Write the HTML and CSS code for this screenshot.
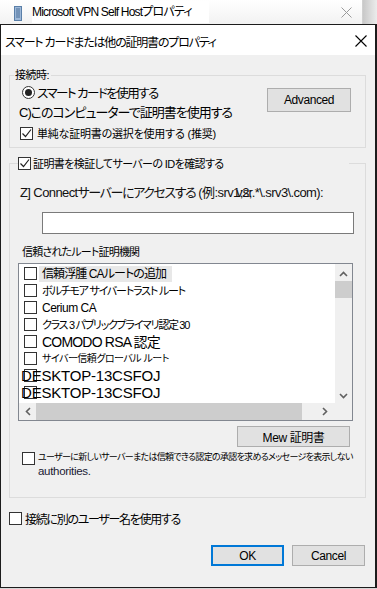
FILE: index.html
```html
<!DOCTYPE html>
<html lang="ja">
<head>
<meta charset="utf-8">
<link rel="stylesheet" href="styles.css">
</head>
<body>
<div class="parent">
  <div class="pbar">
    <svg class="picon" width="8" height="15" viewBox="0 0 8 15"><rect x="0.5" y="0.5" width="7" height="14" fill="#9db8d8" stroke="#5a7fa8"/><path d="M2 3h4M2 5h4M2 7h4M2 9h4M2 11h4" stroke="#4a6f98" stroke-width="1"/></svg>
    <span class="ptitle">Microsoft VPN Self Hostプロパティ</span>
    <span class="pfill"></span>
    <svg class="pclose" width="11" height="11" viewBox="0 0 11 11"><path d="M0.5 0.5l10 10M10.5 0.5l-10 10" stroke="#9a9a9a" stroke-width="1"/></svg>
  </div>
  <div class="pshadow"></div>
</div>
<div class="dialog">
  <div class="titlebar">
    <span class="title">スマート カードまたは他の証明書のプロパティ</span>
    <svg class="close" width="12" height="12" viewBox="0 0 12 12"><path d="M0.5 0.5l11 11M11.5 0.5l-11 11" stroke="#000" stroke-width="1.1"/></svg>
  </div>
  <div class="client">
    <div class="group g1">
      <div class="legend lg1">接続時:</div>
      <div class="g1body">
        <div class="opts">
          <div class="row r1"><span class="radio"><span class="dot"></span></span><span class="t12c">スマート カードを使用する</span></div>
          <div class="row r2 t13">C)このコンピューターで証明書を使用する</div>
          <div class="row r3"><span class="cb"><svg width="11" height="11" viewBox="0 0 11 11"><path d="M1.5 5.5l3 3 5.5-7" fill="none" stroke="#222" stroke-width="1.2"/></svg></span><span class="t11">単純な証明書の選択を使用する (推奨)</span></div>
        </div>
        <button class="btn adv">Advanced</button>
      </div>
    </div>
    <div class="group g2">
      <div class="legend lg2"><span class="cb"><svg width="11" height="11" viewBox="0 0 11 11"><path d="M1.5 5.5l3 3 5.5-7" fill="none" stroke="#222" stroke-width="1.2"/></svg></span><span class="t11b">証明書を検証してサーバーの IDを確認する</span></div>
      <div class="connect">Z] Connect<span class="jp">サーバーにアクセスする</span> (例:sr<span class="ov">v1;sr</span>v2;.*\.srv3\.com):</div>
      <div class="textbox"></div>
      <div class="listlabel">信頼されたルート証明機関</div>
      <div class="list">
        <div class="lview">
          <div class="items">
            <div class="item"><span class="cb"></span><span class="it sel f13">信頼浮腫 CAルートの追加</span></div>
            <div class="item"><span class="cb"></span><span class="it f11">ボルチモア サイバートラスト ルート</span></div>
            <div class="item"><span class="cb"></span><span class="it f12">Cerium CA</span></div>
            <div class="item"><span class="cb"></span><span class="it f11b">クラス 3 パブリックプライマリ認定 30</span></div>
            <div class="item"><span class="cb"></span><span class="it f14">COMODO RSA 認定</span></div>
            <div class="item"><span class="cb"></span><span class="it f10">サイバー信頼グローバル ルート</span></div>
            <div class="item"><span class="cb"></span><span class="it host">DESKTOP-13CSFOJ</span></div>
            <div class="item"><span class="cb"></span><span class="it host">DESKTOP-13CSFOJ</span></div>
          </div>
          <div class="vscroll">
            <svg class="arr" width="9" height="6" viewBox="0 0 9 6"><path d="M1 5l3.5-3.5L8 5" fill="none" stroke="#606060" stroke-width="1.6"/></svg>
            <div class="vthumb"></div>
            <div class="vspace"></div>
            <svg class="arr" width="9" height="6" viewBox="0 0 9 6"><path d="M1 1l3.5 3.5L8 1" fill="none" stroke="#606060" stroke-width="1.6"/></svg>
          </div>
        </div>
        <div class="hscroll">
          <svg class="harr" width="6" height="9" viewBox="0 0 6 9"><path d="M5 1L1.5 4.5 5 8" fill="none" stroke="#606060" stroke-width="1.6"/></svg>
          <div class="hthumb"></div>
          <svg class="harr" width="6" height="9" viewBox="0 0 6 9"><path d="M1 1l3.5 3.5L1 8" fill="none" stroke="#606060" stroke-width="1.6"/></svg>
          <div class="corner"></div>
        </div>
      </div>
      <div class="newrow"><button class="btn newbtn">Mew 証明書</button></div>
      <div class="prompt"><span class="cb"></span><div class="ptext"><div class="pline">ユーザーに新しいサーバーまたは信頼できる認定の承認を求めるメッセージを表示しない</div><div class="auth">authorities.</div></div></div>
    </div>
    <div class="altuser"><span class="cb"></span><span class="t12">接続に別のユーザー名を使用する</span></div>
    <div class="buttons"><button class="btn ok">OK</button><button class="btn cancel">Cancel</button></div>
  </div>
</div>
</body>
</html>
```

FILE: styles.css
```css
* { box-sizing: border-box; }
html, body { margin: 0; padding: 0; }
body {
  width: 377px;
  height: 589px;
  overflow: hidden;
  background: #d6d6d6;
  font-family: "Liberation Sans", "Noto Sans CJK JP", sans-serif;
  font-feature-settings: "palt" 1;
  color: #000;
}

/* parent window title bar */
.parent { display: flex; height: 24px; }
.pbar {
  width: 363px;
  display: flex;
  align-items: center;
  background: linear-gradient(#ffffff, #f2f2f2);
  border-right: 1px solid #d0d0d0;
}
.picon { margin-left: 14px; margin-top: 3px; }
.ptitle {
  margin-left: 10px;
  background: #fff;
  height: 22px;
  line-height: 22px;
  padding-right: 17px;
  font-size: 12px;
  letter-spacing: -0.8px;
  color: #000;
}
.pfill { flex: 1; }
.pclose { margin-right: 10px; margin-top: 1px; }
.pshadow { flex: 1; background: linear-gradient(90deg, #c8c8c8, #ececec); }

/* dialog */
.dialog {
  width: 377px;
  height: 564px;
  border: 1px solid #1c1c1c;
  border-right-width: 2px;
  background: #f0f0f0;
  display: flex;
  flex-direction: column;
}
.titlebar {
  height: 30px;
  background: #fff;
  display: flex;
  align-items: center;
  padding-top: 2px;
}
.title {
  margin-left: 4px;
  font-size: 12px;
  letter-spacing: -1.2px;
  flex: 1;
}
.close { margin-right: 8px; }

.client { flex: 1; display: flex; flex-direction: column; }

.group {
  border: 1px solid #dcdcdc;
  margin: 0 9px 0 8px;
}
.legend {
  background: #f0f0f0;
  width: fit-content;
  white-space: nowrap;
}
.g1 { margin-top: 20px; }
.lg1 {
  margin-top: -7px;
  margin-left: 4px;
  padding: 0 2px 0 1px;
  height: 12px;
  line-height: 12px;
  font-size: 11px;
  letter-spacing: -0.5px;
}
.g1body {
  display: grid;
  grid-template-columns: 1fr auto;
  padding: 3px 0 6px 0;
}
.opts { display: flex; flex-direction: column; }
.row { height: 16px; display: flex; align-items: center; white-space: nowrap; }
.r1 { padding-left: 12px; }
.r2 { margin-top: 3px; padding-left: 9px; }
.r3 { margin-top: 6px; padding-left: 10px; }
.t12c { font-size: 12.5px; letter-spacing: -1.5px; }
.t13 { font-size: 13px; letter-spacing: -1px; }
.t11 { font-size: 11px; letter-spacing: -0.2px; }
.t11b { font-size: 11px; letter-spacing: -0.6px; }
.t12 { font-size: 12px; letter-spacing: -1.3px; }

.radio {
  width: 13px; height: 13px;
  border: 1px solid #333;
  border-radius: 50%;
  background: #fff;
  display: flex; align-items: center; justify-content: center;
  margin-right: 2px;
}
.dot { width: 7px; height: 7px; border-radius: 50%; background: #222; }

.cb {
  width: 13px; height: 13px;
  border: 1px solid #333;
  background: #fff;
  flex: none;
  display: flex; align-items: center; justify-content: center;
}
.r3 .cb { margin-right: 4px; }

.btn {
  font-family: "Liberation Sans", "Noto Sans CJK JP", sans-serif;
  font-feature-settings: "palt" 1;
  background: #e1e1e1;
  border: 1px solid #adadad;
  color: #000;
  padding: 0;
  font-size: 12px;
  letter-spacing: -0.4px;
}
.adv { width: 84px; height: 24px; margin: 4px 14px 0 0; }

.g2 { margin-top: 15px; padding-bottom: 19px; }
.lg2 {
  margin-top: -8px;
  margin-left: 8px;
  width: 331px;
  height: 14px;
  display: flex;
  align-items: center;
}
.lg2 .cb { margin-right: 2px; }

.connect {
  margin: 15px 0 0 10px;
  height: 16px;
  line-height: 16px;
  font-size: 13px;
  letter-spacing: -0.6px;
  white-space: nowrap;
  color: #111;
}
.jp { letter-spacing: -1.4px; }
.ov { margin-right: -16px; letter-spacing: -0.6px; }
.textbox {
  margin: 11px 0 0 32px;
  width: 312px;
  height: 22px;
  background: #fff;
  border: 1px solid #7a7a7a;
}
.listlabel {
  margin: 11px 0 0 12px;
  height: 14px;
  line-height: 14px;
  font-size: 11px;
  letter-spacing: -0.8px;
}
.list {
  margin: 4px 0 0 8px;
  width: 335px;
  height: 158px;
  border: 1px solid #828790;
  background: #fff;
  display: flex;
  flex-direction: column;
}
.lview { flex: 1; display: flex; min-height: 0; }
.items { flex: 1; padding-top: 1px; overflow: hidden; }
.item {
  height: 17px;
  display: flex;
  align-items: center;
  padding-left: 5px;
  white-space: nowrap;
}
.it { margin-left: 5px; line-height: 16px; }
.sel { background: #e8e8e8; padding: 0 6px 0 3px; margin-left: 2px; }
.f13 { font-size: 12px; letter-spacing: -0.9px; }
.f11 { font-size: 11px; letter-spacing: -1.2px; }
.f11b { font-size: 11px; letter-spacing: -1.3px; }
.f12 { font-size: 12px; letter-spacing: -0.5px; }
.f14 { font-size: 14px; letter-spacing: -0.8px; }
.f10 { font-size: 10px; letter-spacing: -0.5px; }
.host { font-size: 15px; margin-left: -16px; letter-spacing: -0.2px; }

.vscroll {
  width: 17px;
  background: #f0f0f0;
  display: flex;
  flex-direction: column;
  align-items: center;
}
.vscroll .arr { margin: 7px 0 4px; }
.vthumb { width: 17px; height: 17px; background: #cdcdcd; }
.vspace { flex: 1; }
.hscroll {
  height: 17px;
  background: #f0f0f0;
  display: flex;
  align-items: center;
}
.harr { margin: 0 5px 0 6px; }
.hthumb { width: 266px; height: 17px; background: #cdcdcd; margin-right: 20px; }
.hscroll .harr:last-of-type { margin: 0; }
.corner { flex: 1; }

.newrow { display: flex; justify-content: flex-end; margin-top: 5px; }
.newbtn { width: 113px; height: 21px; margin-right: 15px; font-size: 12px; }

.prompt { display: flex; margin: 3px 0 0 12px; }
.prompt .cb { margin-top: 2px; }
.ptext { margin-left: 3px; }
.pline { height: 14px; line-height: 14px; font-size: 9px; letter-spacing: -0.7px; white-space: nowrap; }
.auth { height: 14px; line-height: 14px; font-size: 11.5px; letter-spacing: -0.3px; color: #1a1a33; }

.altuser {
  margin: 13px 0 0 8px;
  height: 14px;
  display: flex;
  align-items: center;
}
.altuser .cb { margin-right: 3px; }

.buttons {
  display: flex;
  justify-content: flex-end;
  gap: 8px;
  margin: 20px 10px 0 0;
}
.buttons .btn { width: 73px; height: 21px; font-size: 12px; }
.ok { border: 2px solid #0078d7; }
```
